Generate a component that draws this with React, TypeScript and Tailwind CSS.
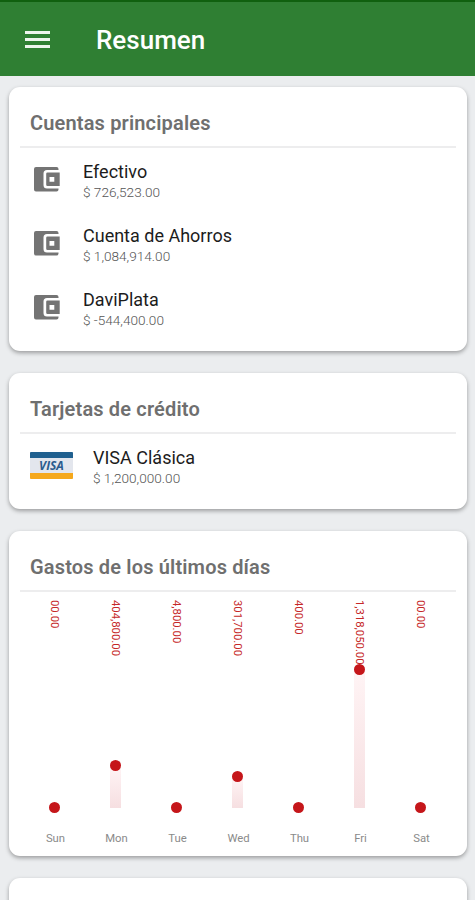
import { ReactNode } from "react";

const accounts = [
    { name: "Efectivo", balance: "$ 726,523.00" },
    { name: "Cuenta de Ahorros", balance: "$ 1,084,914.00" },
    { name: "DaviPlata", balance: "$ -544,400.00" },
];

// bar is the height of the column in px
const days = [
    { day: "Sun", amount: "00.00", bar: 0 },
    { day: "Mon", amount: "404,800.00", bar: 42 },
    { day: "Tue", amount: "4,800.00", bar: 0 },
    { day: "Wed", amount: "301,700.00", bar: 31 },
    { day: "Thu", amount: "400.00", bar: 0 },
    { day: "Fri", amount: "1,318,050.00", bar: 138 },
    { day: "Sat", amount: "00.00", bar: 0 },
];

const WalletIcon = () => (
    <svg className="mt-[19px] w-[26px] h-[25px] shrink-0" viewBox="0 0 26 25">
        <path
            fill="#747474"
            d="M2 0H22.5Q24.5 0 24.5 2V3H13Q9.500 3 9.500 6.500V18Q9.500 21.500 13 21.500H24.500V22.500Q24.500 24.500 22.500 24.500H2Q0 24.500 0 22.500V2Q0 0 2 0Z"
        />
        <path
            fill="#747474"
            fillRule="evenodd"
            d="M13.500 5.500H25.700V19H13.500Q12.200 19 12.200 17.700V6.800Q12.200 5.500 13.500 5.500ZM15.500 9.900V14.700H20.300V9.900Z"
        />
    </svg>
);

const VisaCard = () => (
    <div className="flex flex-col w-[43px] h-[27px] shrink-0 rounded-[1px] overflow-hidden bg-[#e3e6ed]">
        <div className="h-[6px] bg-[#20608f]" />
        <div className="flex-1 flex items-center justify-center font-['Open_Sans',sans-serif] font-bold italic text-[12px] leading-none text-[#2b5c8e]">
            VISA
        </div>
        <div className="h-[6px] bg-[#f5a81c]" />
    </div>
);

const AccountText = ({ name, balance }: { name: string; balance: string }) => (
    <div>
        <p className="text-[18px] leading-[22px] text-[#1c1c1c]">{name}</p>
        <p className="-mt-px text-[13.600px] leading-[20px] font-light text-[#555555]">{balance}</p>
    </div>
);

const Card = ({ title, children }: { title: string; children?: ReactNode }) => (
    <section className="rounded-[11px] bg-white px-[11px] shadow-[0_2px_4px_rgba(0,0,0,0.34)]">
        <h2 className="h-[61px] pt-[23px] pl-[10px] text-[20px] leading-[26px] font-semibold tracking-[0.16px] text-[#6f6f6f] border-b-2 border-[#ededee]">
            {title}
        </h2>
        {children}
    </section>
);

const App = () => {
    return (
        <div className="h-[900px] overflow-hidden bg-[#ebedef] font-[Roboto,sans-serif]">
            <header className="h-[76px] flex items-center pl-[25px] pt-[2px] bg-[#2f7f33] border-t-2 border-[#10600f]">
                <div className="flex flex-col gap-[4px] w-[25px] -mt-[2px]">
                    <div className="h-[3px] bg-[#edf5ed]" />
                    <div className="h-[3px] bg-[#edf5ed]" />
                    <div className="h-[3px] bg-[#edf5ed]" />
                </div>
                <h1 className="ml-[46px] text-[26px] leading-[32px] font-medium text-white">Resumen</h1>
            </header>

            <main className="flex flex-col gap-[22px] pl-[9px] pr-[8px] pt-[11px]">
                <Card title="Cuentas principales">
                    <div className="h-[203px]">
                        {accounts.map((account) => (
                            <div key={account.name} className="flex h-[64px] pl-[14px]">
                                <WalletIcon />
                                <div className="ml-[23px] pt-[13px]">
                                    <AccountText name={account.name} balance={account.balance} />
                                </div>
                            </div>
                        ))}
                    </div>
                </Card>

                <Card title="Tarjetas de crédito">
                    <div className="flex h-[75px] pt-[13px] pl-[10px]">
                        <div className="pt-[5px]">
                            <VisaCard />
                        </div>
                        <div className="ml-[20px]">
                            <AccountText name="VISA Clásica" balance="$ 1,200,000.00" />
                        </div>
                    </div>
                </Card>

                <Card title="Gastos de los últimos días">
                    <div className="flex h-[264px] ml-[4px] w-[427px]">
                        {days.map((item) => (
                            <div key={item.day} className="relative flex flex-col items-center w-[61px] pt-[8px]">
                                <span className="mr-[2px] h-[66px] text-[11.300px] leading-[14px] text-[#c62828] whitespace-nowrap [writing-mode:vertical-rl]">
                                    {item.amount}
                                </span>
                                <div className="absolute bottom-[48px] flex flex-col items-center">
                                    <div className="relative size-[11px] -mb-[5px] rounded-full bg-[#c5161a]" />
                                    <div
                                        className="w-[11px] bg-linear-to-b from-[#fff4f5] to-[#f6dfe1]"
                                        style={{ height: item.bar }}
                                    />
                                </div>
                                <span className="mt-auto mb-[9px] ml-[2px] text-[11.300px] leading-[16px] text-[#8a8a8a]">{item.day}</span>
                            </div>
                        ))}
                    </div>
                </Card>

                <Card title="" />
            </main>
        </div>
    );
};

export default App;
